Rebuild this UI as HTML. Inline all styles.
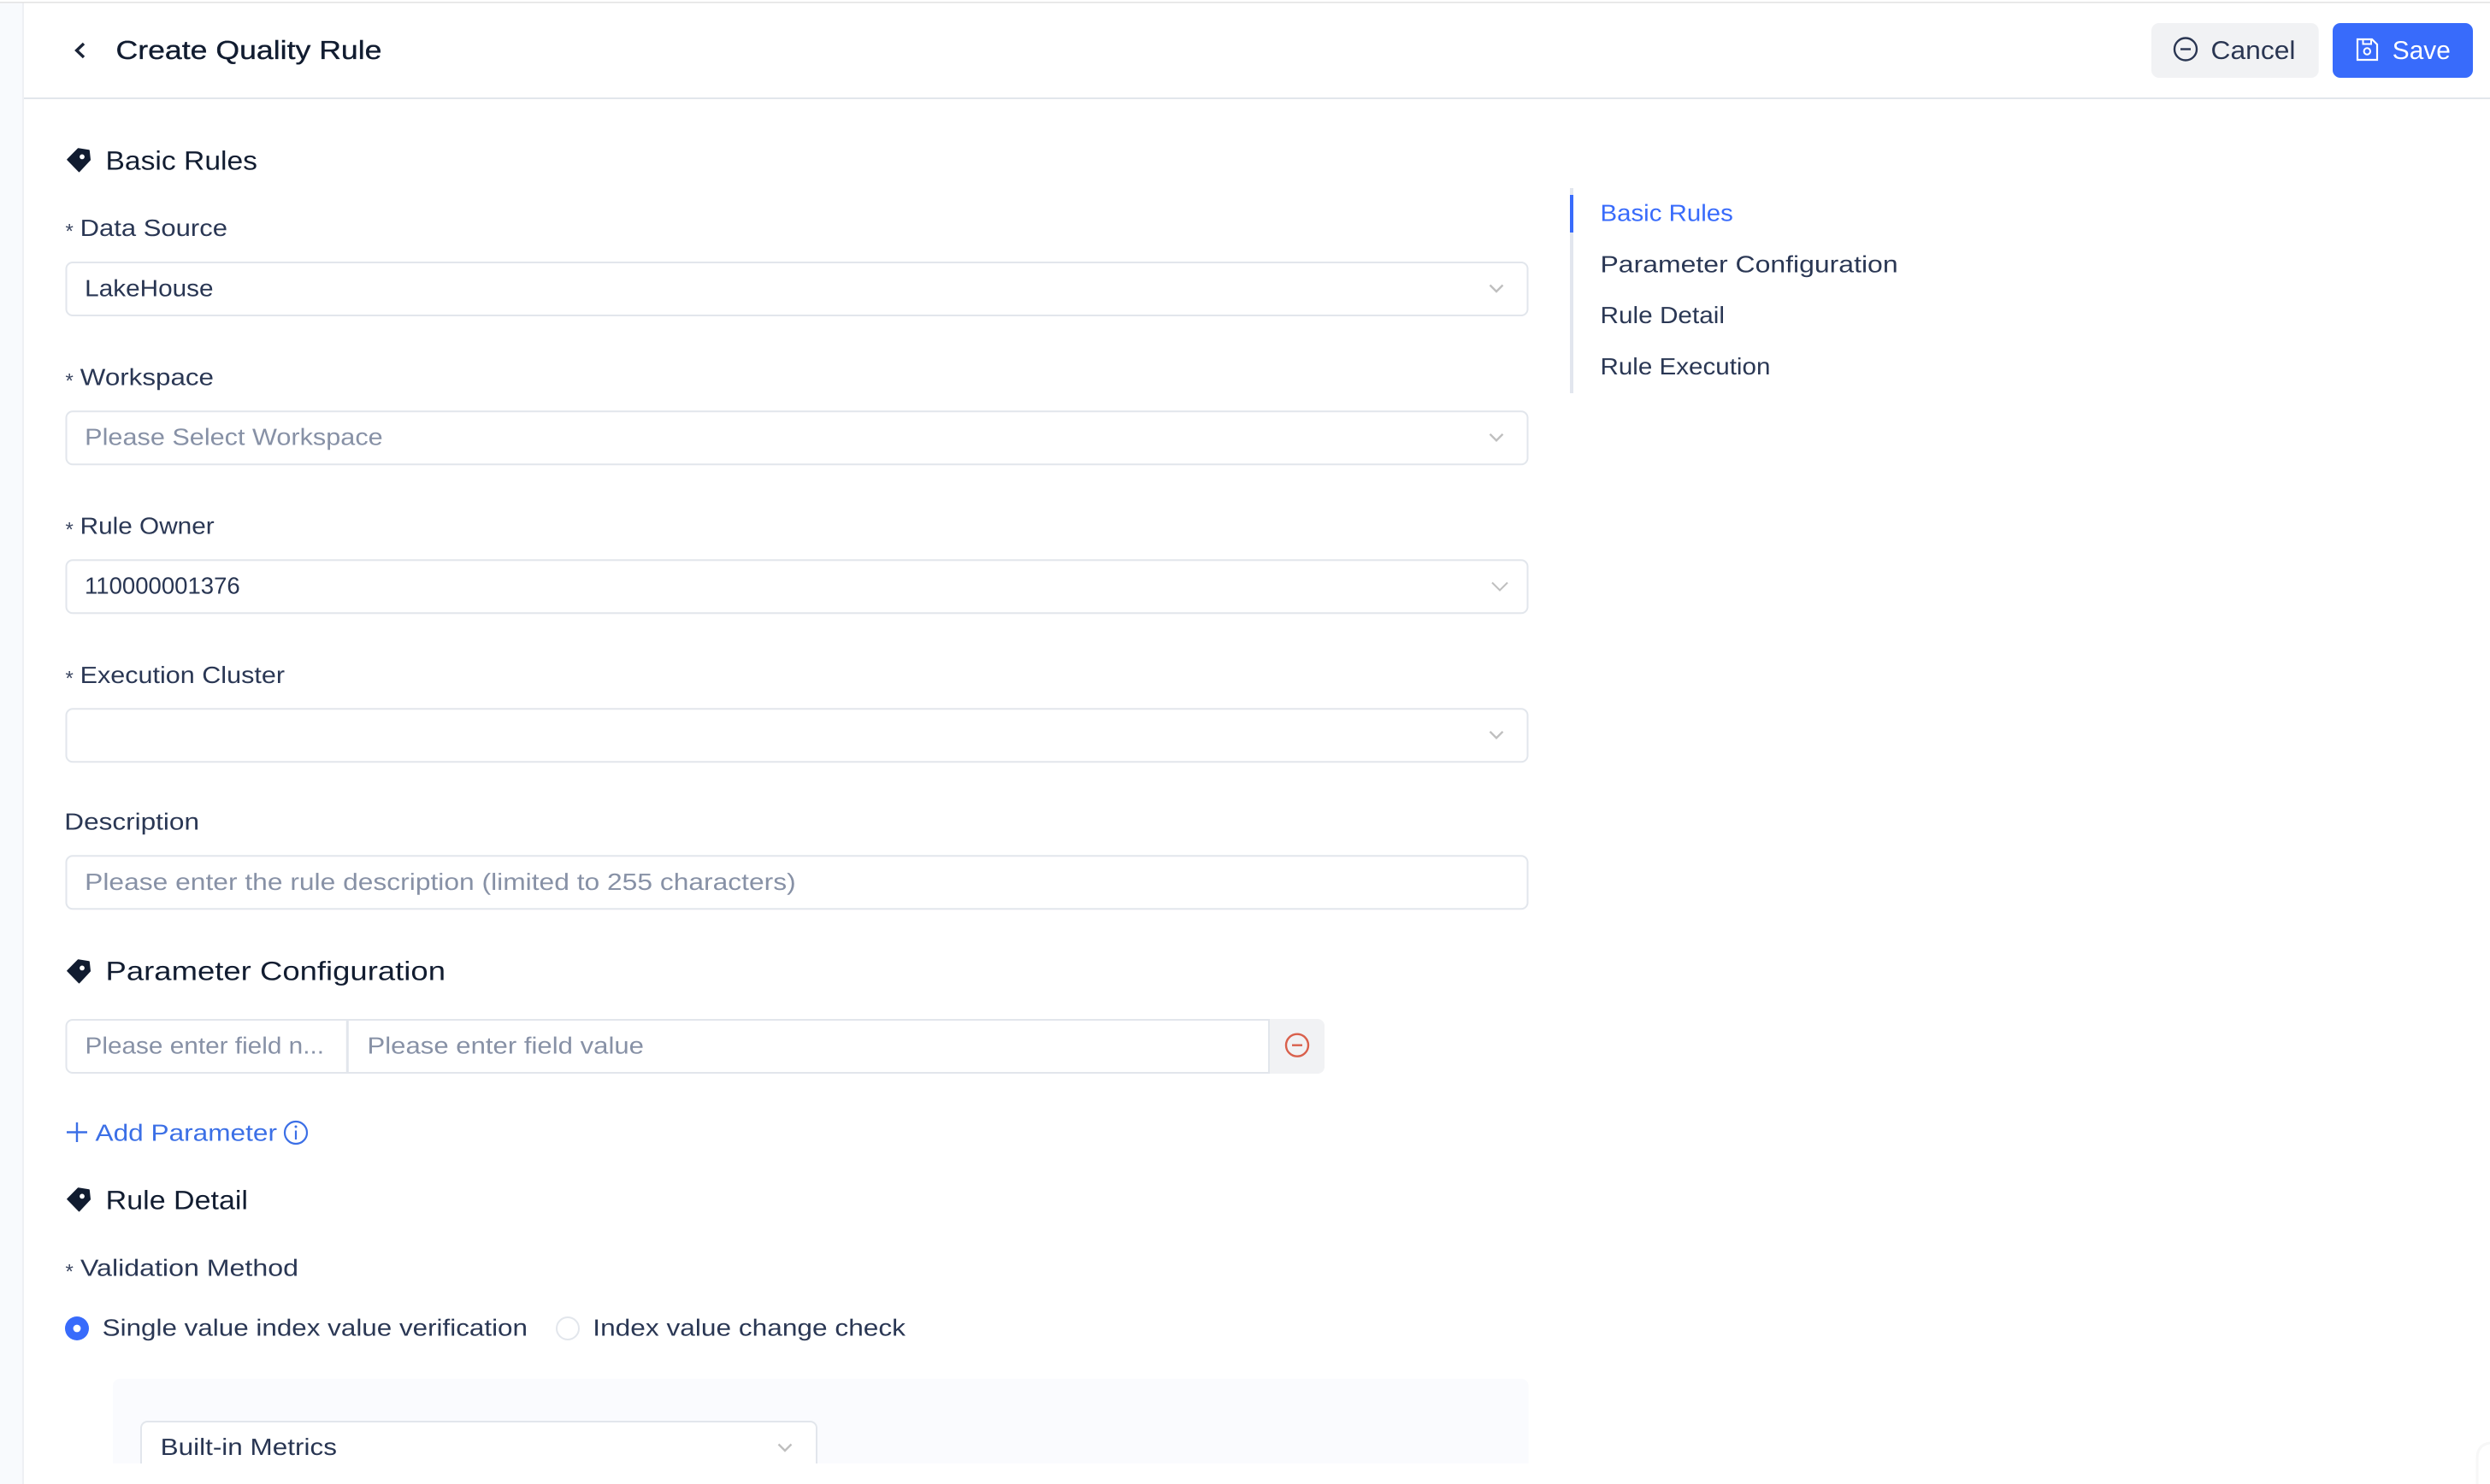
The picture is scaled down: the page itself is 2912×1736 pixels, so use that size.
<!DOCTYPE html>
<html lang="en">
<head>
<meta charset="utf-8">
<title>Create Quality Rule</title>
<style>
html,body{margin:0;padding:0;background:#fff;width:2912px;height:1736px;overflow:hidden}
svg{display:block}
text{font-family:"Liberation Sans",sans-serif;text-rendering:geometricPrecision;white-space:pre}
.t{font-size:30.5px;fill:#111c30;stroke:#111c30;stroke-width:.35px}
.h{font-size:31px;fill:#111c30}
.l{font-size:27.5px;fill:#2a3754}
.v{font-size:27.5px;fill:#283552}
.p{font-size:27.5px;fill:#8791a6}
.s{font-size:24px;fill:#3a4560}
.n{font-size:27.5px;fill:#2a3754}
.box{fill:#fff;stroke:#e2e6ec;stroke-width:2}
.chev{fill:none;stroke:#bfbfbf;stroke-width:2.4}
</style>
</head>
<body>
<svg xmlns="http://www.w3.org/2000/svg" width="2912" height="1736" viewBox="0 0 2912 1736">
  <defs>
    <g id="tag">
      <path d="M1 13.7 L13.6 1 L26 3 L27.2 14 L14.5 27.6 Z" fill="#111c30" stroke="#111c30" stroke-width="1.6" stroke-linejoin="round"/>
      <circle cx="18" cy="10.4" r="2.9" fill="#fff"/>
    </g>
    <clipPath id="content"><rect x="28" y="0" width="2884" height="1712"/></clipPath>
  </defs>

  <!-- page chrome -->
  <rect x="0" y="0" width="2912" height="1736" fill="#fff"/>
  <rect x="0" y="3.5" width="26" height="1733" fill="#f8fafd"/>
  <rect x="26" y="3.5" width="2" height="1733" fill="#eef0f4"/>
  <rect x="0" y="2" width="2912" height="1.6" fill="#e4e4e4"/>
  <rect x="28" y="114" width="2884" height="2" fill="#e2e6ec"/>
  <path d="M2897 1736 V1706 Q2897 1690 2912 1688" fill="none" stroke="#f7f7f7" stroke-width="3"/>

  <!-- header -->
  <path d="M98 51 L89.6 59 L98 67" fill="none" stroke="#1a2438" stroke-width="3.4"/>
  <text class="t" x="135.5" y="69" textLength="311" lengthAdjust="spacingAndGlyphs">Create Quality Rule</text>

  <rect x="2516" y="27" width="195.7" height="64" rx="9" fill="#f1f2f4"/>
  <circle cx="2556" cy="57.5" r="13" fill="none" stroke="#2a3652" stroke-width="2.4"/>
  <path d="M2550 57.5 H2562" stroke="#2a3652" stroke-width="2.4"/>
  <text x="2585.5" y="69" font-size="30" fill="#2a3652" textLength="99" lengthAdjust="spacingAndGlyphs">Cancel</text>

  <rect x="2728" y="27" width="164" height="64" rx="9" fill="#386bfb"/>
  <path d="M2757 46 H2774 L2780 52 V70 H2757 Z" fill="none" stroke="#fff" stroke-width="2.2"/>
  <path d="M2763.5 46 V51.5 H2773 V46" fill="none" stroke="#fff" stroke-width="2"/>
  <circle cx="2768.3" cy="60" r="3.7" fill="none" stroke="#fff" stroke-width="2"/>
  <text x="2797.8" y="69" font-size="30" fill="#fff" textLength="68" lengthAdjust="spacingAndGlyphs">Save</text>

  <!-- anchor nav -->
  <rect x="1836" y="220" width="4" height="240" fill="#e2e6ee"/>
  <rect x="1836" y="228" width="4" height="44" fill="#386bfb"/>
  <text x="1871.5" y="258.3" font-size="27.5" fill="#386bfb" textLength="155.3" lengthAdjust="spacingAndGlyphs">Basic Rules</text>
  <text class="n" x="1871.5" y="318.3" textLength="348.1" lengthAdjust="spacingAndGlyphs">Parameter Configuration</text>
  <text class="n" x="1871.5" y="378" textLength="145.5" lengthAdjust="spacingAndGlyphs">Rule Detail</text>
  <text class="n" x="1871.5" y="438" textLength="198.9" lengthAdjust="spacingAndGlyphs">Rule Execution</text>

  <!-- Basic Rules -->
  <use href="#tag" x="78" y="173"/>
  <text class="h" x="123.5" y="198.5" textLength="177.5" lengthAdjust="spacingAndGlyphs">Basic Rules</text>

  <text class="s" x="76.5" y="278.5">*</text>
  <text class="l" x="93.6" y="276" textLength="172.4" lengthAdjust="spacingAndGlyphs">Data Source</text>
  <rect class="box" x="77.5" y="307" width="1709" height="62" rx="7.5"/>
  <text class="v" x="99.2" y="346.7" textLength="150.3" lengthAdjust="spacingAndGlyphs">LakeHouse</text>
  <path class="chev" d="M1742.5 333.5 L1750 341 L1757.5 333.5"/>

  <text class="s" x="76.5" y="453.5">*</text>
  <text class="l" x="93.8" y="450.5" textLength="156.2" lengthAdjust="spacingAndGlyphs">Workspace</text>
  <rect class="box" x="77.5" y="481.3" width="1709" height="62" rx="7.5"/>
  <text class="p" x="99.2" y="520.7" textLength="348.5" lengthAdjust="spacingAndGlyphs">Please Select Workspace</text>
  <path class="chev" d="M1742.5 507.8 L1750 515.3 L1757.5 507.8"/>

  <text class="s" x="76.5" y="627.5">*</text>
  <text class="l" x="93.6" y="624.5" textLength="157.1" lengthAdjust="spacingAndGlyphs">Rule Owner</text>
  <rect class="box" x="77.5" y="655.3" width="1709" height="62" rx="7.5"/>
  <text class="v" x="99" y="694.7" textLength="181.7" lengthAdjust="spacingAndGlyphs">110000001376</text>
  <path class="chev" style="stroke-width:2" d="M1745 681.5 L1754 690.5 L1763 681.5"/>

  <text class="s" x="76.5" y="801.5">*</text>
  <text class="l" x="93.6" y="798.8" textLength="239.4" lengthAdjust="spacingAndGlyphs">Execution Cluster</text>
  <rect class="box" x="77.5" y="829.3" width="1709" height="62" rx="7.5"/>
  <path class="chev" d="M1742.5 855.8 L1750 863.3 L1757.5 855.8"/>

  <text class="l" x="75.3" y="970.5" textLength="157.7" lengthAdjust="spacingAndGlyphs">Description</text>
  <rect class="box" x="77.5" y="1001.3" width="1709" height="62" rx="7.5"/>
  <text class="p" x="99.2" y="1041" textLength="831.5" lengthAdjust="spacingAndGlyphs">Please enter the rule description (limited to 255 characters)</text>

  <!-- Parameter Configuration -->
  <use href="#tag" x="78" y="1122"/>
  <text class="h" x="123.5" y="1146.5" textLength="397.5" lengthAdjust="spacingAndGlyphs">Parameter Configuration</text>

  <path d="M1484 1192 H1541 A8 8 0 0 1 1549 1200 V1248 A8 8 0 0 1 1541 1256 H1484 Z" fill="#f1f2f4"/>
  <path class="box" d="M1484 1193 H85 A7.5 7.5 0 0 0 77.5 1200.5 V1247.5 A7.5 7.5 0 0 0 85 1255 H1484 Z"/>
  <rect x="404.8" y="1193" width="3" height="62" fill="#e2e6ec"/>
  <text class="p" x="99.5" y="1232.7" textLength="279.5" lengthAdjust="spacingAndGlyphs">Please enter field n...</text>
  <text class="p" x="429.5" y="1232.7" textLength="323.5" lengthAdjust="spacingAndGlyphs">Please enter field value</text>
  <circle cx="1517" cy="1222.7" r="13" fill="none" stroke="#d9604c" stroke-width="2.4"/>
  <path d="M1511 1222.7 H1523" stroke="#d9604c" stroke-width="2.4"/>

  <path d="M90 1313 V1336 M78 1324.5 H102" stroke="#3b6fe6" stroke-width="2.4" fill="none"/>
  <text x="111.5" y="1334.7" font-size="27.5" fill="#3b6fe6" textLength="212.5" lengthAdjust="spacingAndGlyphs">Add Parameter</text>
  <circle cx="346" cy="1325" r="13" fill="none" stroke="#3b6fe6" stroke-width="2.2"/>
  <path d="M346 1322.5 V1333" stroke="#3b6fe6" stroke-width="2.2"/>
  <circle cx="346" cy="1318" r="1.5" fill="#3b6fe6"/>

  <!-- Rule Detail -->
  <use href="#tag" x="78" y="1389"/>
  <text class="h" x="123.7" y="1414.5" textLength="166.3" lengthAdjust="spacingAndGlyphs">Rule Detail</text>

  <text class="s" x="76.5" y="1495.5">*</text>
  <text class="l" x="94" y="1492.5" textLength="255" lengthAdjust="spacingAndGlyphs">Validation Method</text>

  <circle cx="90" cy="1554" r="14" fill="#386bfb"/>
  <circle cx="90" cy="1554" r="4.4" fill="#fff"/>
  <text class="l" x="119.7" y="1562.7" textLength="497.3" lengthAdjust="spacingAndGlyphs">Single value index value verification</text>
  <circle cx="664" cy="1554" r="13" fill="#fff" stroke="#e2e6ec" stroke-width="2"/>
  <text class="l" x="693.3" y="1562.7" textLength="365.7" lengthAdjust="spacingAndGlyphs">Index value change check</text>

  <g clip-path="url(#content)">
    <rect x="132" y="1613" width="1655.5" height="140" rx="8" fill="#fafbfe"/>
    <rect class="box" x="165" y="1663" width="790" height="80" rx="7.5"/>
    <text class="v" x="187.6" y="1702" textLength="206.4" lengthAdjust="spacingAndGlyphs">Built-in Metrics</text>
    <path class="chev" d="M910.5 1689.5 L918 1697 L925.5 1689.5"/>
  </g>
</svg>
</body>
</html>
